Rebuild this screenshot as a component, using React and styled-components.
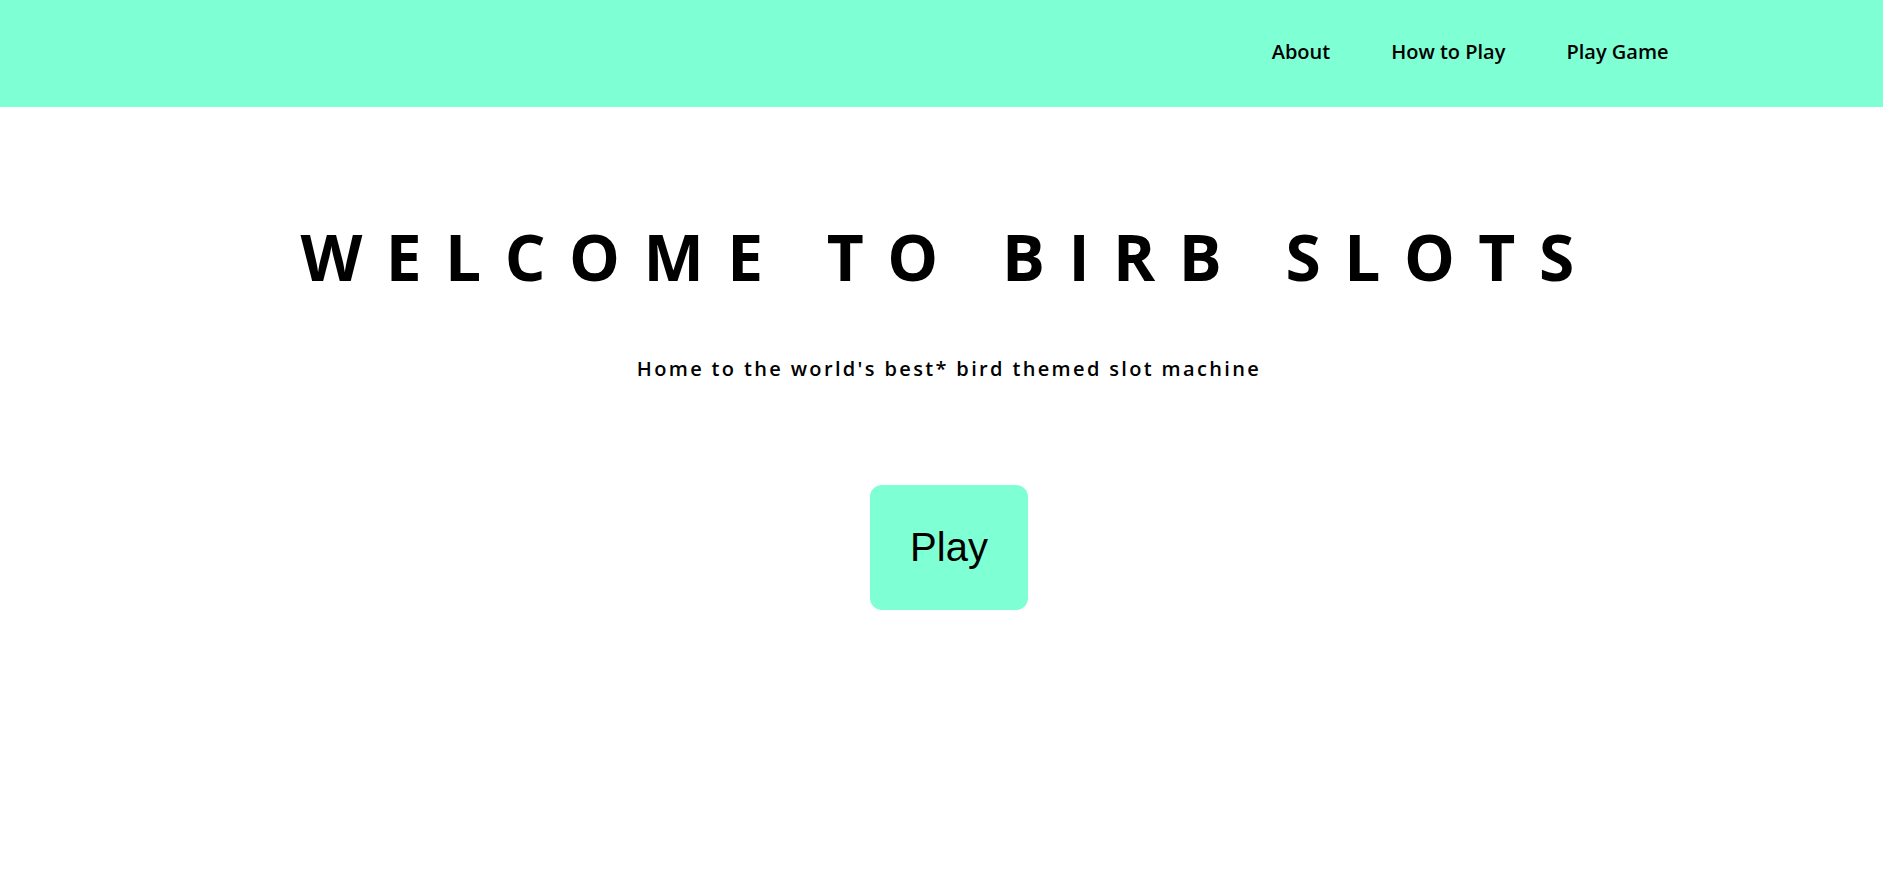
import React from "react";
import styled, { createGlobalStyle } from "styled-components";

const GlobalStyle = createGlobalStyle`
  * {
    box-sizing: border-box;
  }

  body {
    margin: 0;
    background: #ffffff;
    font-family: "Open Sans", "Noto Sans", sans-serif;
    color: #000000;
  }
`;

const links = ["About", "How to Play", "Play Game"];

const App = () => {
  return (
    <>
      <GlobalStyle />
      <NavBar>
        <NavList>
          {links.map((link) => (
            <NavItem key={link}>
              <NavLink href="#">{link}</NavLink>
            </NavItem>
          ))}
        </NavList>
      </NavBar>
      <Main>
        <Title>Welcome to Birb Slots</Title>
        <Subtitle>Home to the world's best* bird themed slot machine</Subtitle>
        <PlayButton>Play</PlayButton>
      </Main>
    </>
  );
};

export default App;

const NavBar = styled.header`
  display: flex;
  justify-content: flex-end;
  align-items: center;
  height: 107px;
  background: #7fffd4;
  padding: 0 184px 5px 0;
`;

const NavList = styled.ul`
  display: flex;
  list-style: none;
  margin: 0;
  padding: 0;
`;

const NavItem = styled.li`
  padding: 0 30.5px;
`;

const NavLink = styled.a`
  font-size: 20px;
  font-weight: 600;
  color: #000000;
  text-decoration: none;
`;

const Main = styled.main`
  display: flex;
  flex-direction: column;
  align-items: center;
  padding-left: 15px;
`;

const Title = styled.h1`
  margin: 106px 0 0;
  font-size: 64px;
  font-weight: 700;
  text-transform: uppercase;
  letter-spacing: 23.5px;
  line-height: normal;
`;

const Subtitle = styled.p`
  margin: 55px 0 0;
  font-size: 20px;
  font-weight: 600;
  letter-spacing: 2.35px;
`;

const PlayButton = styled.button`
  margin-top: 103px;
  padding: 40px;
  border: none;
  border-radius: 12px;
  background: #7fffd4;
  font-family: "Liberation Sans", Arial, sans-serif;
  font-size: 40px;
  color: #000000;
  cursor: pointer;
`;
